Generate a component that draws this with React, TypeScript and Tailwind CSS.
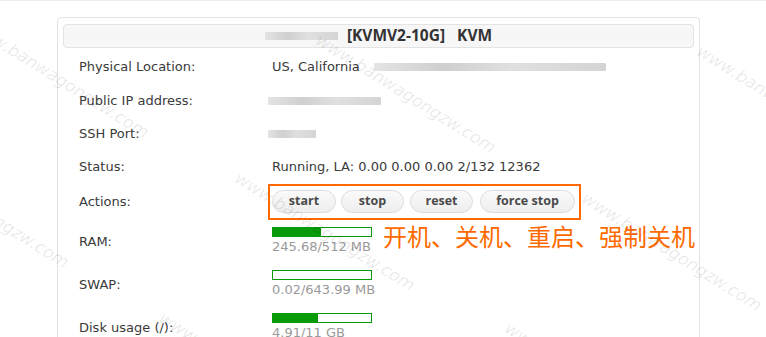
const marks: [number, number][] = [
  [-23, 12],
  [324, 27],
  [705, 38],
  [243, 165],
  [-103, 142],
  [590, 185],
  [167, 305],
  [513, 315],
];

function Blur({ w, className = "" }: { w: number; className?: string }) {
  return (
    <span
      className={`inline-block h-[8px] rounded-[1px] bg-[linear-gradient(90deg,#e4e4e4,#cfcfcf_30%,#e0e0e0_60%,#d4d4d4)] blur-[0.6px] ${className}`}
      style={{ width: w }}
    />
  );
}

function Bar({ pct, text }: { pct: number; text: string }) {
  return (
    <div className="pt-[7px]">
      <div className="h-[10px] w-[100px] border border-[#089a08] bg-white">
        <div className="h-full bg-[#089a08]" style={{ width: `${pct}%` }} />
      </div>
      <div className="mt-[2px] text-[13px] leading-[16px] text-[#9a9a9a]">{text}</div>
    </div>
  );
}

function Row({ label, h, children, top = false }: { label: string; h: number; children: React.ReactNode; top?: boolean }) {
  return (
    <div className="flex" style={{ height: h }}>
      <div className="flex w-[205px] items-center pl-[16px]">{label}</div>
      <div className={`flex flex-1 ${top ? "items-start" : "items-center"}`}>{children}</div>
    </div>
  );
}

export default function App() {
  const btn =
    "flex h-[23px] items-center justify-center rounded-full border border-[#dcdcdc] bg-[linear-gradient(#fafafa,#eeeeee)] text-[12.5px] font-bold text-[#4a4a4a] [font-family:'Open_Sans',sans-serif]";
  return (
    <div className="relative h-[337px] w-[766px] overflow-hidden border-t border-[#ececec] bg-white text-[13px] text-[#3a3a3a] [font-family:'DejaVu_Sans',Verdana,sans-serif]">
      <div className="ml-[57px] mt-[16px] h-[330px] w-[643px] rounded-[4px] border border-[#e2e2e2] bg-white px-[5px] pt-[6px]">
        <div className="flex h-[24px] items-center justify-center rounded-[4px] border border-[#e3e3e3] bg-[#f7f7f7] text-[15.5px] font-bold text-[#333] [font-family:'Open_Sans',sans-serif]">
          <Blur w={73} className="mr-[9px]" />
          <span className="whitespace-pre">[KVMV2-10G]   KVM</span>
        </div>
        <div className="pt-[2px]">
          <Row label="Physical Location:" h={34}>
            <span className="ml-[4px]">US, California</span>
            <Blur w={232} className="ml-[14px] mb-[1px]" />
          </Row>
          <Row label="Public IP address:" h={33}>
            <Blur w={113} />
          </Row>
          <Row label="SSH Port:" h={33}>
            <Blur w={48} />
          </Row>
          <Row label="Status:" h={33}>
            <span className="ml-[4px]">Running, LA: 0.00 0.00 0.00 2/132 12362</span>
          </Row>
          <Row label="Actions:" h={37}>
            <div className="flex h-[36px] items-center gap-[5px] border-2 border-[#ff6a00] pl-[2px] pr-[4px]">
              <div className={`${btn} w-[64px]`}>start</div>
              <div className={`${btn} w-[63px]`}>stop</div>
              <div className={`${btn} ml-[1px] w-[63px]`}>reset</div>
              <div className={`${btn} ml-[2px] w-[95px]`}>force stop</div>
            </div>
          </Row>
          <Row label="RAM:" h={43} top>
            <div className="ml-[4px]">
              <Bar pct={49} text="245.68/512 MB" />
            </div>
          </Row>
          <Row label="SWAP:" h={43} top>
            <div className="ml-[4px]">
              <Bar pct={0} text="0.02/643.99 MB" />
            </div>
          </Row>
          <Row label="Disk usage (/):" h={43} top>
            <div className="ml-[4px]">
              <Bar pct={46} text="4.91/11 GB" />
            </div>
          </Row>
        </div>
      </div>

      <div className="absolute left-[383px] top-[218px] text-[24px] leading-[34px] text-[#ff6a00] [font-family:'Noto_Sans_CJK_SC',sans-serif]">
        开机、关机、重启、强制关机
      </div>

      {marks.map(([x, y], i) => (
        <span
          key={i}
          className="pointer-events-none absolute origin-top-left rotate-[32deg] whitespace-nowrap text-[17px] italic text-black/[0.09] [font-family:'DejaVu_Sans',sans-serif]"
          style={{ left: x, top: y }}
        >
          www.banwagongzw.com
        </span>
      ))}
    </div>
  );
}
